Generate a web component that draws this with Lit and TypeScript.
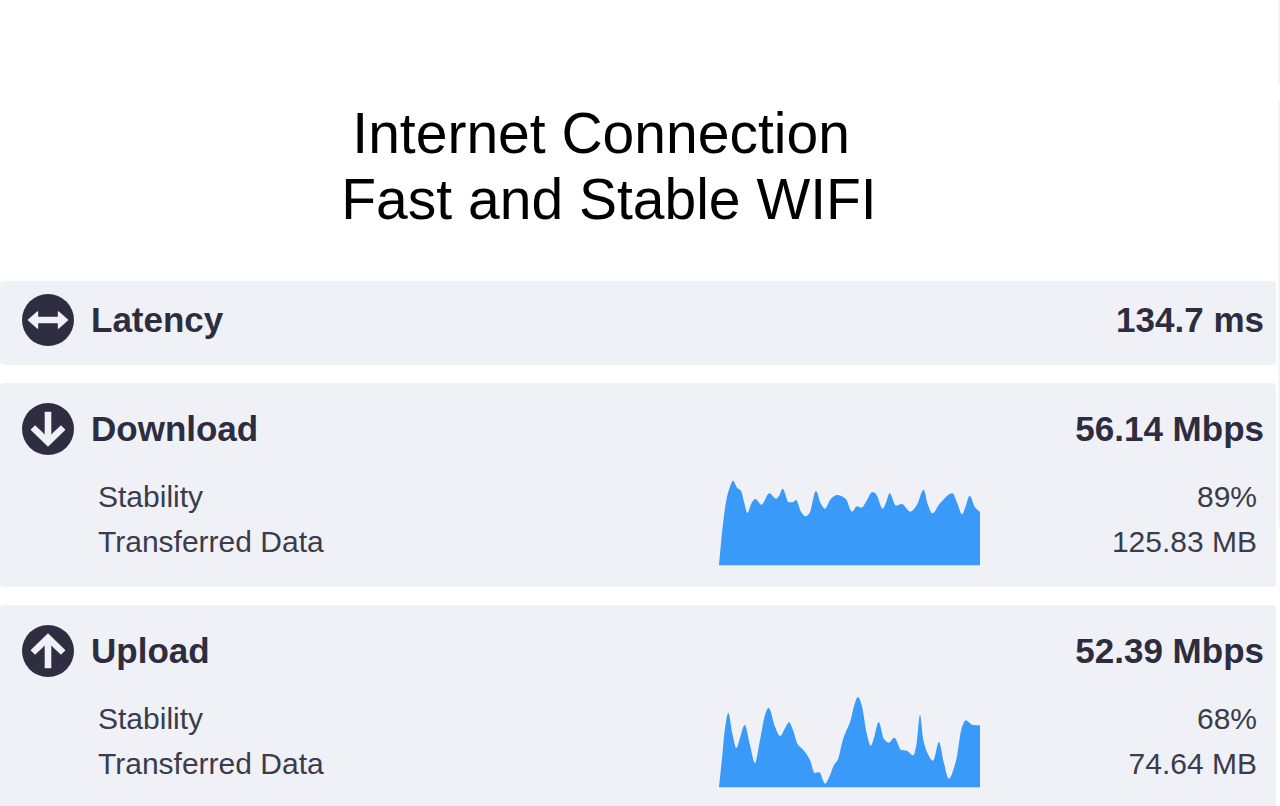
import { LitElement, html, css, svg, nothing } from "lit";
import { customElement, property } from "lit/decorators.js";

type Point = [number, number];

/* Chart samples: x runs 0..783, y runs 0 (top) .. 270 (baseline). */
const DOWNLOAD: Point[] = [
  [0, 270], [11, 155], [23, 70], [33, 35], [42, 17], [55, 39], [66, 47], [75, 80], [85, 114],
  [98, 83], [109, 72], [127, 89], [151, 55], [171, 71], [180, 63], [191, 41], [209, 82],
  [221, 82], [231, 75], [246, 110], [260, 124], [272, 113], [291, 48], [305, 85], [317, 101],
  [336, 71], [354, 60], [380, 71], [399, 110], [414, 94], [427, 98], [443, 77], [460, 51],
  [471, 57], [491, 101], [501, 83], [512, 55], [531, 92], [548, 87], [574, 110], [593, 91],
  [614, 44], [627, 90], [640, 115], [663, 85], [700, 55], [715, 85], [729, 118], [738, 100],
  [752, 62], [768, 97], [783, 111],
];

const UPLOAD: Point[] = [
  [0, 269], [9, 184], [18, 94], [28, 47], [40, 109], [52, 153], [64, 119], [77, 84], [93, 144],
  [108, 198], [123, 129], [138, 54], [149, 32], [168, 89], [184, 117], [198, 94], [210, 76],
  [223, 102], [236, 142], [253, 159], [273, 189], [287, 228], [301, 226], [318, 260],
  [331, 239], [345, 204], [356, 189], [373, 124], [395, 69], [406, 24], [417, 0], [428, 24],
  [443, 109], [455, 146], [465, 122], [479, 75], [495, 126], [509, 137], [526, 122],
  [547, 159], [563, 161], [583, 175], [593, 139], [603, 54], [613, 129], [625, 167],
  [642, 191], [660, 135], [675, 199], [689, 245], [711, 192], [728, 94], [740, 70],
  [761, 84], [783, 85],
];

/* Monotone cubic area path, so peaks stay round without overshooting. */
function areaPath(points: Point[]): string {
  const slope = (i: number) =>
    (points[i + 1][1] - points[i][1]) / (points[i + 1][0] - points[i][0]);
  const last = points.length - 1;
  const tangents = points.map((_, i) => {
    if (i === 0) return slope(0);
    if (i === last) return slope(last - 1);
    const a = slope(i - 1);
    const b = slope(i);
    return a * b <= 0 ? 0 : (2 * a * b) / (a + b);
  });
  let d = `M${points[0][0]} ${points[0][1]}`;
  for (let i = 0; i < last; i++) {
    const [x0, y0] = points[i];
    const [x1, y1] = points[i + 1];
    const h = (x1 - x0) / 3;
    d += `C${x0 + h} ${y0 + tangents[i] * h} ${x1 - h} ${y1 - tangents[i + 1] * h} ${x1} ${y1}`;
  }
  return `${d}V271H0Z`;
}

const ARROWS = {
  latency: svg`<path d="M6.5 26L15.5 18V23.5H36.5V18L45.5 26L36.5 34V28.5H15.5V34Z" />`,
  download: svg`<path d="M26 8.7V39M10.8 24.5L26 39.2L41.2 24.5" />`,
  upload: svg`<path d="M26 43.3V13M10.8 27.5L26 12.8L41.2 27.5" />`,
};

@customElement("metric-card")
export class MetricCard extends LitElement {
  @property() kind: keyof typeof ARROWS = "latency";
  @property() label = "";
  @property() value = "";
  @property() stability = "";
  @property() transferred = "";
  @property({ attribute: false }) points?: Point[];

  static styles = css`
    :host {
      display: block;
    }
    .card {
      background: #f0f1f7;
      border-radius: 4px;
      padding: 20px 12px 22px 22px;
    }
    .compact {
      padding-top: 13px;
      padding-bottom: 19px;
    }
    .head {
      display: flex;
      align-items: center;
      gap: 17px;
      color: #2e2d40;
      font-size: 35px;
      line-height: 52px;
      font-weight: 700;
    }
    .icon {
      flex: none;
      width: 52px;
      height: 52px;
    }
    .disc {
      fill: #2e2d42;
    }
    .arrow {
      fill: none;
      stroke: #f0f1f7;
      stroke-width: 6.6;
    }
    .arrow-latency {
      fill: #f0f1f7;
      stroke-width: 1.4;
      stroke-linejoin: round;
    }
    .title {
      flex: 1;
      margin: 0;
      font: inherit;
    }
    .details {
      display: grid;
      grid-template-columns: 1fr 261px 277px;
      grid-auto-rows: 45px;
      margin-top: 20px;
      padding: 0 7px 0 76px;
      color: #3b3b4b;
      font-size: 30px;
      line-height: 43px;
    }
    .list {
      display: contents;
    }
    .name {
      grid-column: 1;
    }
    .amount {
      grid-column: 3;
      margin: 0;
      text-align: right;
    }
    .chart {
      grid-column: 2;
      grid-row: 1 / span 2;
      width: 100%;
      height: 90px;
      overflow: visible;
      fill: #3a9afa;
    }
  `;

  render() {
    return html`
      <section class="card ${this.points ? "" : "compact"}">
        <div class="head">
          <svg class="icon" viewBox="0 0 52 52" aria-hidden="true">
            <circle class="disc" cx="26" cy="26" r="26" />
            <g class="arrow arrow-${this.kind}">${ARROWS[this.kind]}</g>
          </svg>
          <h2 class="title">${this.label}</h2>
          <span>${this.value}</span>
        </div>
        ${this.points
          ? html`<div class="details">
              <svg class="chart" viewBox="0 0 783 270" preserveAspectRatio="none" aria-hidden="true">
                <path d=${areaPath(this.points)} />
              </svg>
              <dl class="list">
                <dt class="name">Stability</dt>
                <dd class="amount">${this.stability}</dd>
                <dt class="name">Transferred Data</dt>
                <dd class="amount">${this.transferred}</dd>
              </dl>
            </div>`
          : nothing}
      </section>
    `;
  }
}

@customElement("app-root")
export class AppRoot extends LitElement {
  static styles = css`
    :host {
      display: flex;
      gap: 2px;
      height: 100vh;
      overflow: hidden;
      background: #fff;
      font-family: "Liberation Sans", Arial, sans-serif;
    }
    .page {
      flex: 1;
      min-width: 0;
    }
    .heading {
      margin: 0;
      padding: 100px 58px 49px 0;
      color: #000;
      font-size: 57px;
      line-height: 66px;
      font-weight: 400;
      text-align: center;
    }
    .cards {
      display: flex;
      flex-direction: column;
      gap: 18px;
    }
    .rail {
      display: grid;
      grid-template-rows: 84px 426px;
      gap: 17px;
      width: 2px;
    }
    .track {
      background: #f4f4f6;
    }
  `;

  render() {
    return html`
      <main class="page">
        <h1 class="heading">Internet Connection&nbsp;<br />Fast and Stable WIFI</h1>
        <div class="cards">
          <metric-card kind="latency" label="Latency" value="134.7 ms"></metric-card>
          <metric-card
            kind="download"
            label="Download"
            value="56.14 Mbps"
            stability="89%"
            transferred="125.83 MB"
            .points=${DOWNLOAD}
          ></metric-card>
          <metric-card
            kind="upload"
            label="Upload"
            value="52.39 Mbps"
            stability="68%"
            transferred="74.64 MB"
            .points=${UPLOAD}
          ></metric-card>
        </div>
      </main>
      <div class="rail" aria-hidden="true">
        <div class="track"></div>
        <div class="track"></div>
      </div>
    `;
  }
}
